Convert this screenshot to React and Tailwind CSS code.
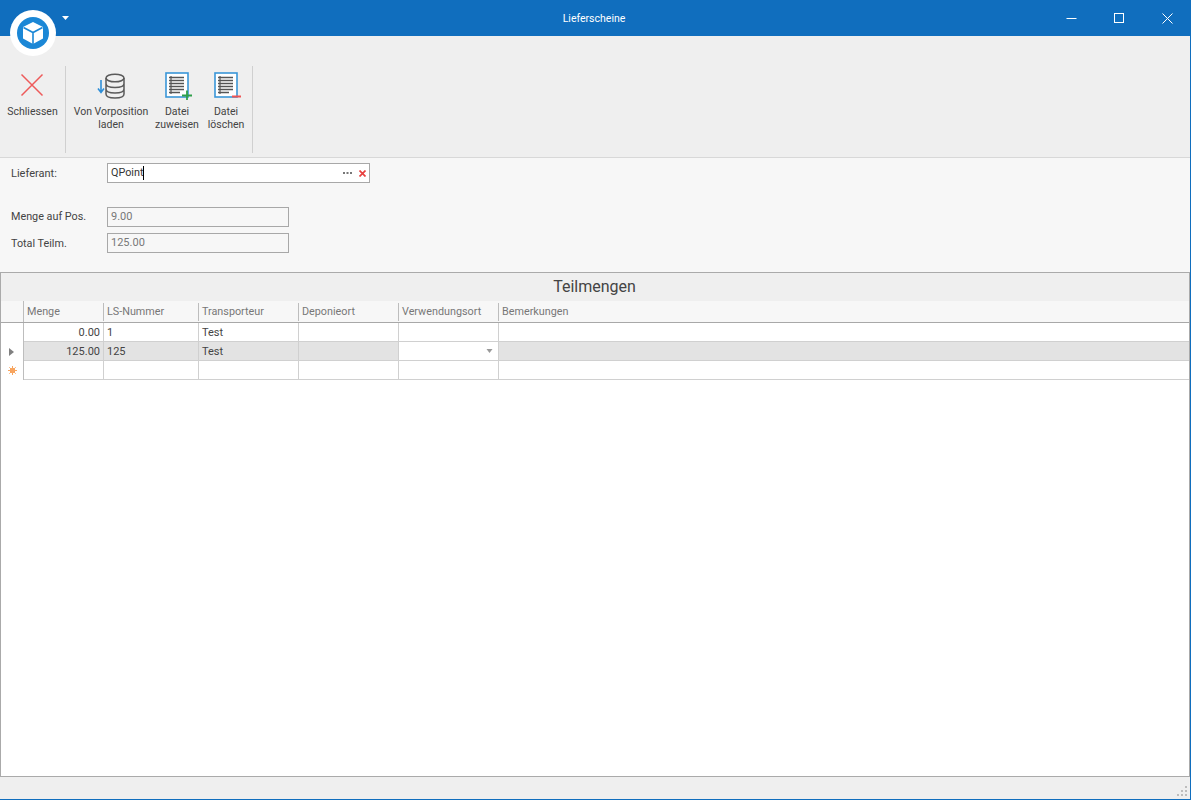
const font = { fontFamily: 'Roboto, "Noto Sans", sans-serif' };

function Logo() {
  return (
    <div className="absolute left-[10px] top-[10px] w-[46px] h-[46px] rounded-full bg-white flex items-center justify-center">
      <svg width="32" height="32" viewBox="0 0 32 32">
        <circle cx="16" cy="16" r="16" fill="#1b87d6" />
        <path d="M16 5 L26 10 L26 21.5 L16 27 L6 21.5 L6 10 Z" fill="#fff" />
        <path d="M6.5 10.5 L16 15.5 L25.5 10.5 M16 15.5 L16 27" fill="none" stroke="#1b87d6" strokeWidth="1.6" />
      </svg>
    </div>
  );
}

function TitleBar() {
  return (
    <div className="h-[36px] bg-[#106ebe] flex items-center relative shrink-0">
      <svg className="absolute left-[62px] top-[16px]" width="7" height="4" viewBox="0 0 7 4"><path d="M0 0H7L3.5 4Z" fill="#fff" /></svg>
      <div className="flex-1 text-center text-white text-[10.5px] pt-[2px] pr-[2px]">Lieferscheine</div>
      <div className="flex items-center absolute right-[-1px] top-0 h-[36px]">
        <div className="w-[48px] flex justify-center">
          <svg width="11" height="11" viewBox="0 0 11 11"><path d="M0.5 5.5H10.5" stroke="#fff" strokeWidth="1" /></svg>
        </div>
        <div className="w-[48px] flex justify-center">
          <svg width="10" height="10" viewBox="0 0 10 10"><rect x="0.5" y="0.5" width="9" height="9" fill="none" stroke="#fff" /></svg>
        </div>
        <div className="w-[48px] flex justify-center">
          <svg width="11" height="11" viewBox="0 0 11 11"><path d="M0.5 0.5L10.5 10.5M10.5 0.5L0.5 10.5" stroke="#fff" strokeWidth="1" /></svg>
        </div>
      </div>
    </div>
  );
}

function ListIcon({ children }) {
  return (
    <svg width="28" height="28" viewBox="0 0 28 28">
      <rect x="1" y="1" width="22" height="24" fill="#fff" stroke="#3a96d8" strokeWidth="1.6" />
      <path d="M6 4V22" stroke="#555" strokeWidth="1.2" />
      <path d="M4 5.5H19M4 8.5H19M4 11.5H19M4 14.5H19M4 17.5H19M4 20.5H15" stroke="#555" strokeWidth="1.5" />
      {children}
    </svg>
  );
}

function RibbonBtn({ w, icon, label, label2 }) {
  return (
    <div className="flex flex-col items-center shrink-0 text-[#444] text-[10.5px] leading-[13px]" style={{ width: w }}>
      <div className="h-[32px] flex items-center justify-center mb-[3px]">{icon}</div>
      <div className="whitespace-nowrap text-center">{label}</div>
      {label2 && <div className="whitespace-nowrap text-center">{label2}</div>}
    </div>
  );
}

function Ribbon() {
  return (
    <div className="h-[122px] bg-[#efefef] border-b border-[#d8d8d8] flex items-start pt-[30px] shrink-0">
      <div className="w-[66px] flex justify-center pt-[4px] h-[87px] border-r border-[#d0d0d0]">
        <RibbonBtn
          w={64}
          label="Schliessen"
          icon={
            <svg width="24" height="24" viewBox="0 0 24 24" className="mr-[1px] mb-[2px]"><path d="M1.5 1.5L22.5 22.5M22.5 1.5L1.5 22.5" stroke="#ee5a5a" strokeWidth="1.5" /></svg>
          }
        />
      </div>
      <div className="flex pt-[4px] h-[87px] border-r border-[#d0d0d0] w-[187px] pl-[6px]">
        <RibbonBtn
          w={78}
          label="Von Vorposition"
          label2="laden"
          icon={
            <svg width="32" height="28" viewBox="0 0 32 28" className="mb-[1px]">
              <path d="M6 8V20M3 16.5L6 20.5L9 16.5" fill="none" stroke="#2f8fd8" strokeWidth="1.6" />
              <ellipse cx="20" cy="6" rx="9" ry="3.8" fill="none" stroke="#5a5a5a" strokeWidth="1.5" />
              <path d="M11 6V22C11 24.5 15 26 20 26C25 26 29 24.5 29 22V6M11 11.5C11 14 15 15.5 20 15.5C25 15.5 29 14 29 11.5M11 17C11 19.5 15 21 20 21C25 21 29 19.5 29 17" fill="none" stroke="#5a5a5a" strokeWidth="1.5" />
            </svg>
          }
        />
        <RibbonBtn
          w={54}
          label="Datei"
          label2="zuweisen"
          icon={
            <div className="pl-[3px]"><ListIcon><path d="M17 23.5H27M22 18.5V28" stroke="#2fa04a" strokeWidth="1.8" /></ListIcon></div>
          }
        />
        <RibbonBtn
          w={44}
          label="Datei"
          label2="löschen"
          icon={
            <div className="pl-[3px]"><ListIcon><path d="M18 24.5H27" stroke="#ee5555" strokeWidth="2" /></ListIcon></div>
          }
        />
      </div>
    </div>
  );
}

function Row({ label, value, className, labelClass }) {
  return (
    <div className={"flex items-center pl-[11px] " + className}>
      <div className={"w-[96px] text-[10.8px] text-[#444] " + labelClass}>{label}</div>
      <div className="w-[182px] h-[20px] border border-[#a8a8a8] pl-[3px] text-[11px] leading-[18px] text-[#777]">{value}</div>
    </div>
  );
}

function Form() {
  return (
    <div className="h-[114px] bg-[#f7f7f7] pt-[5px] shrink-0">
      <div className="flex items-center pl-[11px] mb-[24px]">
        <div className="w-[96px] text-[11px] text-[#444] pt-[2px]">Lieferant:</div>
        <div className="w-[263px] h-[20px] bg-white border border-[#a8a8a8] pl-[3px] flex items-center text-[10.8px] text-[#333]">
          <span>QPoint</span>
          <span className="w-px h-[14px] bg-black" />
          <div className="ml-auto flex items-center gap-[7px] pr-[3px]">
            <svg width="9" height="3" viewBox="0 0 9 3"><path d="M0 1H2M3.5 1H5.5M7 1H9" stroke="#777" strokeWidth="2" /></svg>
            <svg width="7" height="7" viewBox="0 0 7 7"><path d="M0.5 0.5L6.5 6.5M6.5 0.5L0.5 6.5" stroke="#e8403f" strokeWidth="1.7" /></svg>
          </div>
        </div>
      </div>
      <Row label="Menge auf Pos." value="9.00" className="mb-[6px]" labelClass="pt-[1px]" />
      <Row label="Total Teilm." value="125.00" labelClass="pt-[3px]" />
    </div>
  );
}

const cols = [
  { w: 80, label: "Menge" },
  { w: 95, label: "LS-Nummer" },
  { w: 100, label: "Transporteur" },
  { w: 100, label: "Deponieort" },
  { w: 100, label: "Verwendungsort" },
];

function HeaderCell({ label }) {
  return (
    <div className="flex-1 flex items-center pl-[3px] pt-[2px] text-[10.8px] text-[#777]">
      <span className="whitespace-nowrap">{label}</span>
    </div>
  );
}

function Cell({ w, value, right, children, white }) {
  return (
    <div
      className={"shrink-0 border-r border-[#d0d0d0] h-full px-[3px] pt-[2px] flex items-center text-[11px] text-[#444] " + (right ? "justify-end " : "") + (white ? "bg-white" : "")}
      style={{ width: w }}
    >
      {value}
      {children}
    </div>
  );
}

function DataRow({ selected, indicator, values, combo }) {
  return (
    <div className={"h-[19px] flex shrink-0 " + (selected ? "bg-[#e3e3e3]" : "bg-white")}>
      <div className="w-[23px] shrink-0 bg-white border-r border-[#bdbdbd] flex items-center justify-center">{indicator}</div>
      <div className="flex flex-1 border-b border-[#d0d0d0]">
        <Cell w={80} value={values[0]} right />
        <Cell w={95} value={values[1]} />
        <Cell w={100} value={values[2]} />
        <Cell w={100} value="" />
        <Cell w={100} value="" white={combo} right>
          {combo && <svg width="7" height="4" viewBox="0 0 7 4" className="mr-[2px] mb-[2px]"><path d="M0.5 0H6.5L3.5 4Z" fill="#9a9a9a" /></svg>}
        </Cell>
        <div className="flex-1" />
      </div>
    </div>
  );
}

function Grid() {
  return (
    <div className="flex-1 border border-[#aaaaaa] bg-white flex flex-col min-h-0">
      <div className="h-[28px] bg-[#efefef] flex items-center justify-center text-[16px] text-[#444] shrink-0 pr-[1px]">Teilmengen</div>
      <div className="h-[22px] bg-[#f7f7f7] border-b border-[#a8a8a8] flex shrink-0 relative">
        <div className="w-[23px] shrink-0 border-r border-[#bdbdbd]" />
        {cols.map((c) => (
          <div key={c.label} className="shrink-0 flex items-center" style={{ width: c.w }}>
            <HeaderCell label={c.label} />
            <div className="w-px h-[18px] bg-[#bdbdbd]" />
          </div>
        ))}
        <HeaderCell label="Bemerkungen" />
      </div>
      <DataRow values={["0.00", "1", "Test"]} />
      <DataRow
        selected
        combo
        values={["125.00", "125", "Test"]}
        indicator={<svg width="5" height="8" viewBox="0 0 5 8" className="mr-[2px]"><path d="M0 0L5 4L0 8Z" fill="#808080" /></svg>}
      />
      <DataRow
        values={["", "", ""]}
        indicator={
          <svg width="9" height="9" viewBox="0 0 9 9">
            <circle cx="4.5" cy="4.5" r="2.5" fill="#f58a2e" />
            <path d="M4.5 0V9M0 4.5H9M1.3 1.3L7.7 7.7M7.7 1.3L1.3 7.7" stroke="#f8a560" strokeWidth="1" />
          </svg>
        }
      />
    </div>
  );
}

function StatusBar() {
  return (
    <div className="h-[22px] bg-[#efefef] shrink-0 flex justify-end items-end pr-[3px] pb-[3px]">
      <svg width="10" height="10" viewBox="0 0 10 10" fill="#bdbdbd">
        <rect x="8" y="0" width="2" height="2" />
        <rect x="4" y="4" width="2" height="2" />
        <rect x="8" y="4" width="2" height="2" />
        <rect x="0" y="8" width="2" height="2" />
        <rect x="4" y="8" width="2" height="2" />
        <rect x="8" y="8" width="2" height="2" />
      </svg>
    </div>
  );
}

export default function App() {
  return (
    <div className="h-[800px] w-[1191px] overflow-hidden flex flex-col relative border-b border-r border-[#106ebe]" style={font}>
      <TitleBar />
      <Ribbon />
      <Form />
      <Grid />
      <StatusBar />
      <Logo />
    </div>
  );
}
